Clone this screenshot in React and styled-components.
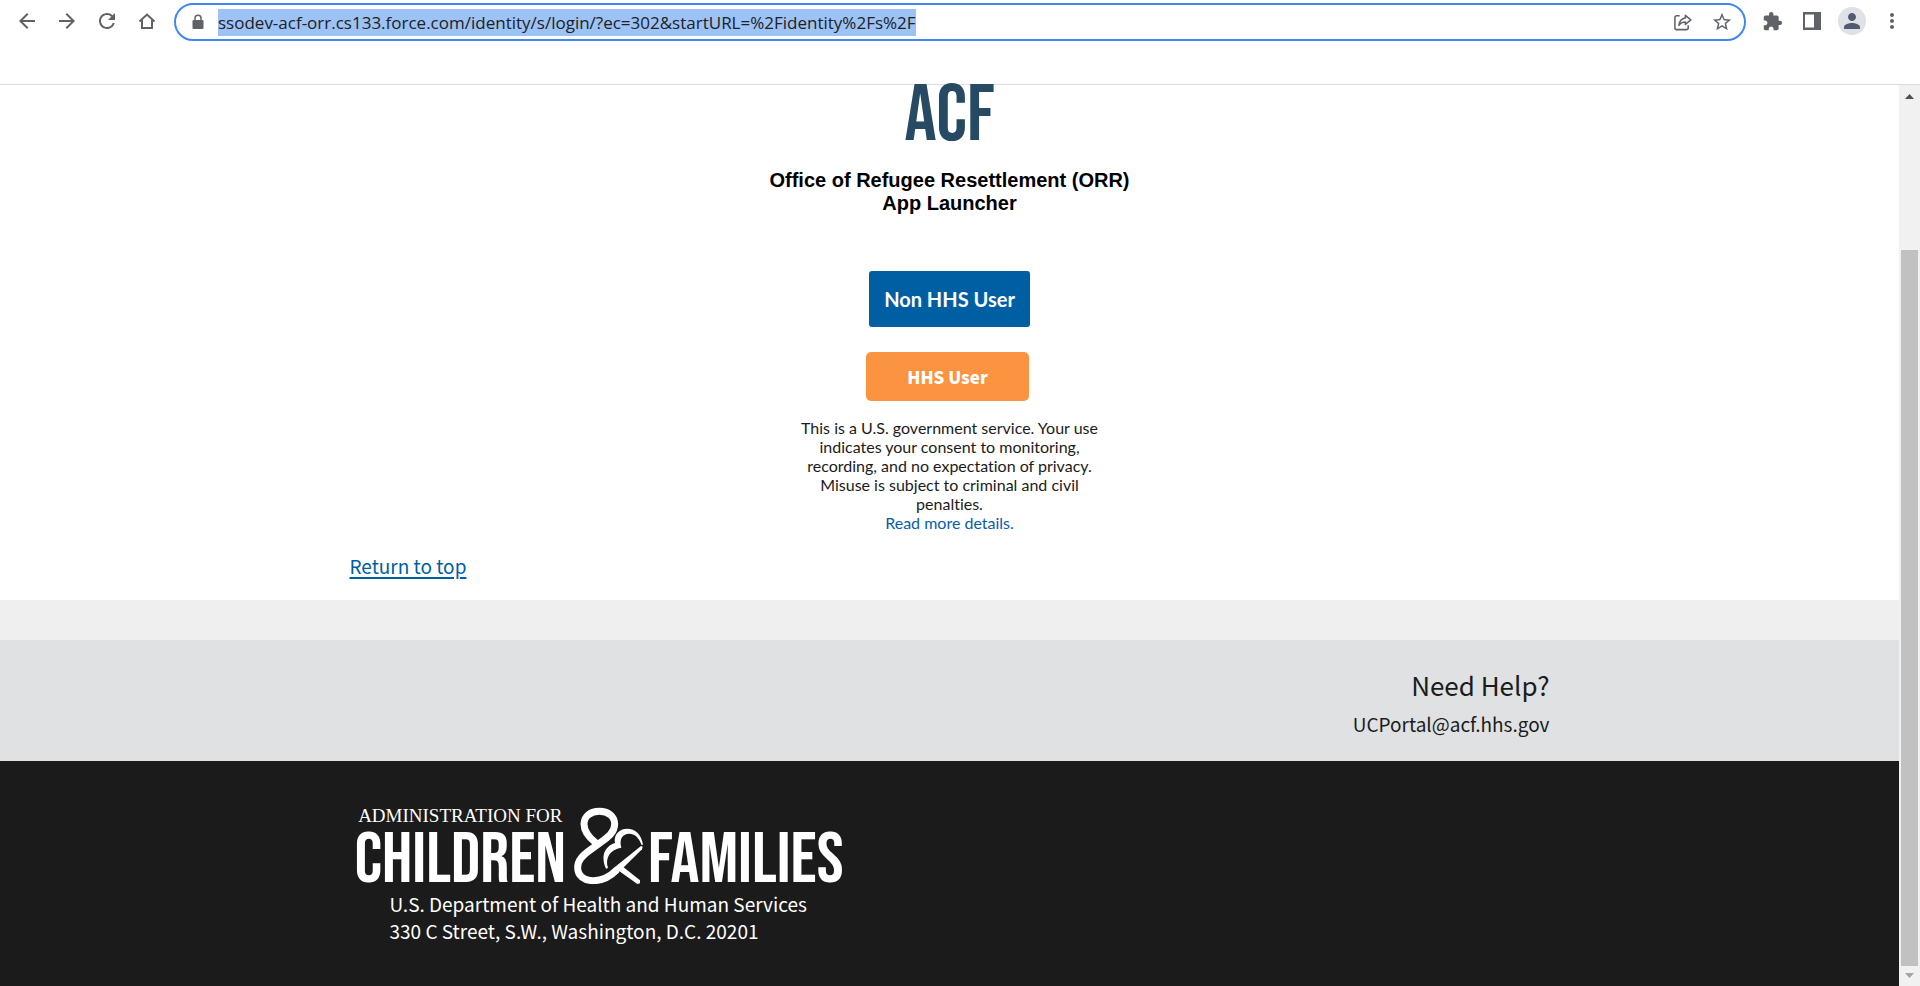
import React from "react";
import styled, { createGlobalStyle } from "styled-components";
import {
  MdArrowBack,
  MdArrowForward,
  MdRefresh,
  MdStarBorder,
  MdExtension,
  MdPerson,
  MdMoreVert,
} from "react-icons/md";

const GlobalStyle = createGlobalStyle`
  * { box-sizing: border-box; }
  body { margin: 0; background: #fff; color: #1b1b1b; }
`;

const sourceSans = `"Source Sans Pro", "Noto Sans CJK SC", sans-serif`;
const lato = `Lato, sans-serif`;
const narrow = `"Bebas Neue", "Liberation Sans Narrow", "Liberation Sans", sans-serif`;

const Window = styled.div`
  display: flex;
  flex-direction: column;
  min-height: 100vh;
`;

const Toolbar = styled.header`
  display: flex;
  align-items: flex-start;
  height: 85px;
  padding: 3px 8px 0 7px;
  border-bottom: 1px solid #dadce0;
  color: #5f6368;
`;

const ToolButton = styled.button`
  display: flex;
  align-items: center;
  justify-content: center;
  flex: none;
  width: 40px;
  height: 36px;
  padding: 0;
  border: 0;
  background: none;
  color: inherit;
`;

const AddressBar = styled.div`
  display: flex;
  align-items: center;
  flex: 1;
  min-width: 0;
  height: 38px;
  margin: 0 6px 0 7px;
  padding: 0 2px 0 16px;
  border: 2px solid #4285f4;
  border-radius: 19px;
`;

const UrlSlot = styled.div`
  display: flex;
  flex: 1;
  min-width: 0;
  padding-left: 14px;
`;

const Url = styled.input`
  field-sizing: content;
  max-width: 100%;
  height: 27px;
  padding: 0;
  border: 0;
  outline: 0;
  background: #9cc2f6;
  color: #202124;
  font: 17px/27px "Segoe UI", "Open Sans", sans-serif;
`;

const Avatar = styled.span`
  display: flex;
  align-items: center;
  justify-content: center;
  width: 28px;
  height: 28px;
  border-radius: 50%;
  background: #dee1e6;
  color: #525c70;
`;

const Viewport = styled.div`
  display: flex;
  flex: 1;
`;

const Page = styled.div`
  display: flex;
  flex-direction: column;
  flex: 1;
  min-width: 0;
`;

const Container = styled.div`
  width: 100%;
  max-width: 1200px;
  margin: 0 auto;
`;

const Login = styled.main`
  display: flex;
  flex-direction: column;
  align-items: center;
  text-align: center;
`;

const AcfLogo = styled.div`
  color: #264a64;
  font: 80px/62px ${narrow};
`;

const Title = styled.h1`
  margin: 22px 0 56px;
  color: #000;
  font: bold 20px/23px "Liberation Sans", sans-serif;
`;

const PrimaryButton = styled.button`
  width: 161px;
  height: 56px;
  padding: 0;
  border: 0;
  border-radius: 3px;
  background: #005ea2;
  color: #fff;
  font: bold 20px/24px ${lato};
`;

const AccentButton = styled(PrimaryButton)`
  width: 163px;
  height: 49px;
  margin: 25px 4px 17px 0;
  border-radius: 5px;
  background: #fa9441;
  font: 900 17px/24px ${sourceSans};
`;

const Notice = styled.p`
  width: 308px;
  margin: 0;
  font: 16px/19px ${lato};
  font-variant-ligatures: none;
`;

const NoticeLink = styled.a`
  color: #0b5cab;
  text-decoration: none;
`;

const TopLink = styled.a`
  display: inline-block;
  margin: 20px 0;
  color: #005ea2;
  font: 19px/28px ${sourceSans};
  text-underline-offset: 3px;
  text-decoration-thickness: 2px;
`;

const Spacer = styled.div`
  height: 40px;
  background: #efefef;
`;

const Help = styled.section`
  height: 121px;
  padding-top: 26px;
  background: #dfe1e2;
  text-align: right;
`;

const HelpTitle = styled.h2`
  margin: 0;
  font: 26px/38px ${sourceSans};
`;

const HelpMail = styled.p`
  margin: 4px 0 0;
  font: 19px/32px ${sourceSans};
`;

const Footer = styled.footer`
  flex: 1;
  padding: 46px 0 36px;
  background: #1b1b1b;
  color: #fff;
`;

const FooterLogo = styled.div`
  display: flex;
  align-items: flex-end;
  height: 77px;
  padding-left: 5px;
`;

const LogoStack = styled.div`
  display: flex;
  flex-direction: column;
  align-items: center;
  justify-content: space-between;
  height: 100%;
`;

const LogoSmall = styled.span`
  font: 19px/18px "Liberation Serif", serif;
`;

const LogoWord = styled.span`
  font: 72px/46px ${narrow};
`;

const LogoMark = styled.svg`
  flex: none;
  margin: 0 4px 0 8px;
`;

const Address = styled.address`
  padding: 6px 0 0 40px;
  font: normal 19px/27px ${sourceSans};
`;

const Scrollbar = styled.div`
  display: flex;
  flex-direction: column;
  align-items: center;
  flex: none;
  width: 21px;
  padding: 9px 0 8px;
  background: #f1f1f1;
`;

const Thumb = styled.div`
  flex: 1;
  width: 17px;
  margin: 151px 0 7px;
  background: #c1c1c1;
`;

const HomeIcon = () => (
  <svg width="18" height="18" viewBox="0 0 18 18" fill="none" stroke="currentColor" strokeWidth="2">
    <path d="M1.500 9.500 9 2.500l7.500 7M4 8v8h10V8" />
  </svg>
);

const LockIcon = () => (
  <svg width="12" height="16" viewBox="0 0 12 16">
    <rect x="0.500" y="6" width="11" height="9" rx="1.200" fill="#5f6368" />
    <path d="M3 6.500V4.200a3 3 0 0 1 6 0v2.300" fill="none" stroke="#5f6368" strokeWidth="1.500" />
  </svg>
);

const ShareIcon = () => (
  <svg width="19" height="19" viewBox="0 0 20 20" fill="none" stroke="currentColor" strokeWidth="1.600" strokeLinejoin="round">
    <path d="M7 3H4a2 2 0 0 0-2 2v10.500a2 2 0 0 0 2 2h10a2 2 0 0 0 2-2V13" />
    <path d="M13 2.500 18.800 7.300l-5.800 4.700V9.500c-3 0-5.200 1-6.800 3.500.5-4.500 3-7.300 6.800-7.800z" />
  </svg>
);

const PanelIcon = () => (
  <svg width="18" height="18" viewBox="0 0 18 18" fill="currentColor">
    <path fillRule="evenodd" d="M0 0h18v18H0zM2 2.500v13h9v-13z" />
  </svg>
);

const Ampersand = () => (
  <LogoMark width="70" height="77" viewBox="30 24 210 231" role="img" aria-label="and">
    <path
      fill="none"
      stroke="#fff"
      strokeWidth="21"
      d="M95 131C72 113 60 96 60 75c0-24 20-38 46-38s46 14 46 38c0 25-20 40-42 55L80 152c-25 18-39 32-39 54 0 24 20 39 47 39 28 0 50-12 70-32"
    />
    <path fill="#fff" d="M149 207 231 141l5 2-2 8-70 69z" />
    <path fill="#fff" d="M160 212l15-10 53 42v9l-8 2z" />
    <path
      fill="#fff"
      d="M237 137c-5-32-24-48-47-48-25 0-42 19-37 43-25 8-46 33-27 77l6-2c-9-29 4-55 40-61-8-28 6-42 23-42 17 0 29 11 38 34z"
    />
  </LogoMark>
);

const Arrow = ({ down }) => (
  <svg width="9" height="5" viewBox="0 0 9 5">
    <path d={down ? "M0 0h9L4.500 5z" : "M0 5h9L4.500 0z"} fill={down ? "#a3a3a3" : "#505050"} />
  </svg>
);

export default function App() {
  return (
    <Window>
      <GlobalStyle />
      <Toolbar>
        <ToolButton aria-label="Back"><MdArrowBack size={24} /></ToolButton>
        <ToolButton aria-label="Forward"><MdArrowForward size={24} /></ToolButton>
        <ToolButton aria-label="Reload"><MdRefresh size={24} /></ToolButton>
        <ToolButton aria-label="Home"><HomeIcon /></ToolButton>
        <AddressBar>
          <LockIcon />
          <UrlSlot>
            <Url
              aria-label="Address"
              spellCheck={false}
              defaultValue="ssodev-acf-orr.cs133.force.com/identity/s/login/?ec=302&startURL=%2Fidentity%2Fs%2F"
            />
          </UrlSlot>
          <ToolButton aria-label="Share"><ShareIcon /></ToolButton>
          <ToolButton aria-label="Bookmark"><MdStarBorder size={22} /></ToolButton>
        </AddressBar>
        <ToolButton aria-label="Extensions"><MdExtension size={21} /></ToolButton>
        <ToolButton aria-label="Side panel"><PanelIcon /></ToolButton>
        <ToolButton aria-label="Profile"><Avatar><MdPerson size={24} /></Avatar></ToolButton>
        <ToolButton aria-label="Menu"><MdMoreVert size={24} /></ToolButton>
      </Toolbar>
      <Viewport>
        <Page>
          <Login>
            <AcfLogo>ACF</AcfLogo>
            <Title>
              Office of Refugee Resettlement (ORR)
              <br />
              App Launcher
            </Title>
            <PrimaryButton>Non HHS User</PrimaryButton>
            <AccentButton>HHS User</AccentButton>
            <Notice>
              This is a U.S. government service. Your use indicates your consent to monitoring,
              recording, and no expectation of privacy. Misuse is subject to criminal and civil
              penalties.
              <br />
              <NoticeLink href="#details">Read more details.</NoticeLink>
            </Notice>
          </Login>
          <Container>
            <TopLink href="#top">Return to top</TopLink>
          </Container>
          <Spacer />
          <Help>
            <Container>
              <HelpTitle>Need Help?</HelpTitle>
              <HelpMail>UCPortal@acf.hhs.gov</HelpMail>
            </Container>
          </Help>
          <Footer>
            <Container>
              <FooterLogo>
                <LogoStack>
                  <LogoSmall>ADMINISTRATION FOR</LogoSmall>
                  <LogoWord>CHILDREN</LogoWord>
                </LogoStack>
                <Ampersand />
                <LogoWord>FAMILIES</LogoWord>
              </FooterLogo>
              <Address>
                U.S. Department of Health and Human Services
                <br />
                330 C Street, S.W., Washington, D.C. 20201
              </Address>
            </Container>
          </Footer>
        </Page>
        <Scrollbar aria-hidden="true">
          <Arrow />
          <Thumb />
          <Arrow down />
        </Scrollbar>
      </Viewport>
    </Window>
  );
}
